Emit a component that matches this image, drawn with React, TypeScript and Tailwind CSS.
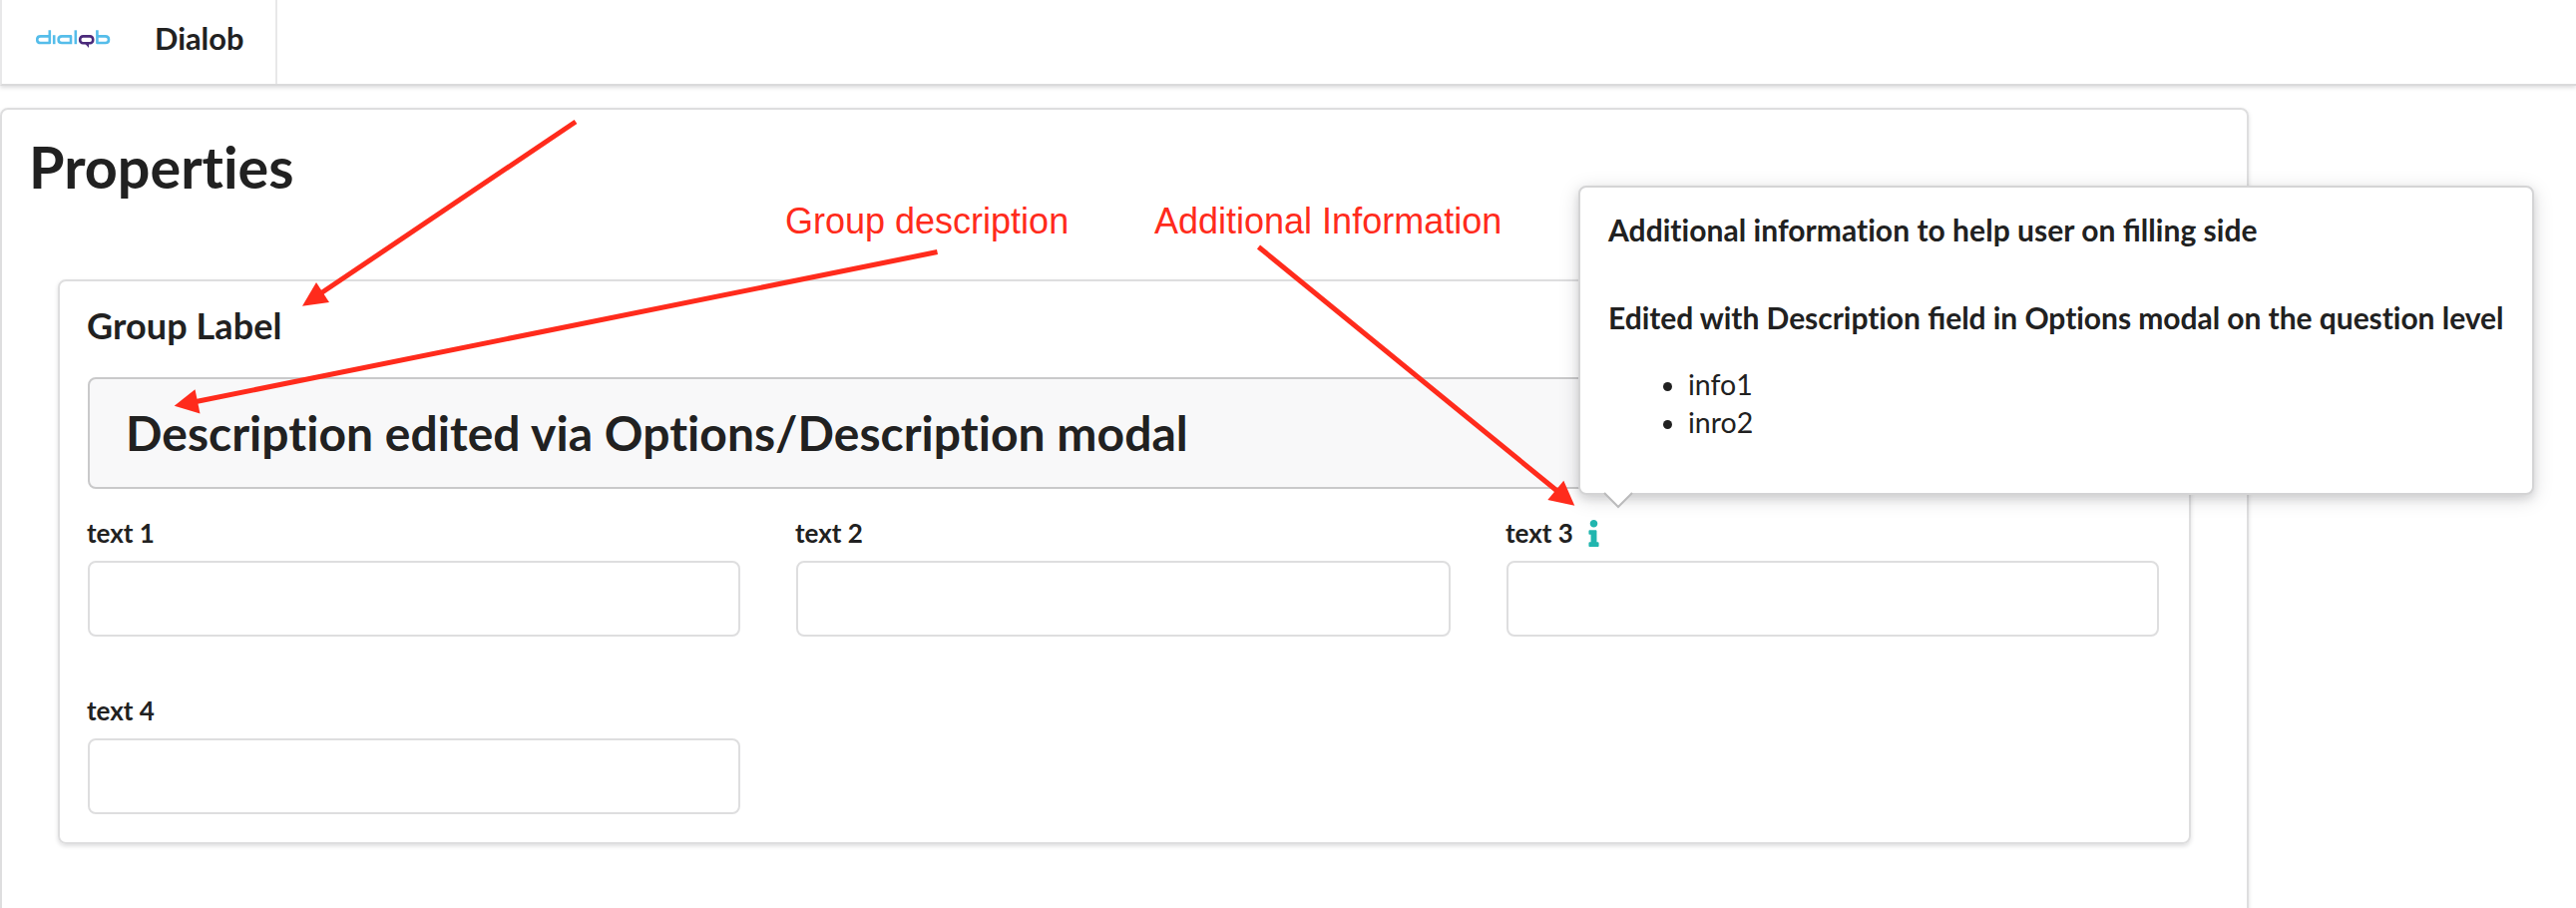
import type { ReactNode } from "react";
import { FaInfo } from "react-icons/fa";

function Logo() {
  return (
    <svg width="76" height="20" viewBox="36 29 76 20" fill="none" strokeWidth="2.6" strokeLinejoin="round">
      <g stroke="#55bdea">
        <path d="M49.8 30.3V43H40.6Q37.2 43 37.2 39.7T40.6 36.4H49.8" />
        <path d="M54.2 35.2V44.2" />
        <path d="M71 44.2V36.4H62Q58.6 36.4 58.6 39.7T62 43H71" />
        <path d="M75.8 30.3V44.2" />
        <path d="M97.4 30.3V43H105.6Q109 43 109 39.7T105.6 36.4H97.4" />
      </g>
      <rect x="80.2" y="36.4" width="13" height="6.8" rx="3" stroke="#4b2a7b" />
      <path d="M85 43.5H89V48Z" fill="#4b2a7b" />
    </svg>
  );
}

function Fi() {
  return <span className="tracking-normal [font-variant-ligatures:common-ligatures]">fi</span>;
}

function Field({ label, children }: { label: string; children?: ReactNode }) {
  return (
    <label className="block">
      <span className="mb-[12px] -ml-px flex h-[32px] items-center text-[26px] leading-[32px] font-bold">
        {label}
        {children}
      </span>
      <input className="block h-[76px] w-full rounded-[8px] border-2 border-[#dededf] bg-white px-7 outline-none" />
    </label>
  );
}

function Popup() {
  return (
    <div className="absolute top-[186px] left-[1582px] h-[310px] w-[958px] rounded-[8px] border-2 border-[#d4d4d5] bg-white px-[28px] pt-[23px] shadow-[0_4px_8px_0_rgba(34,36,38,0.12),0_4px_20px_0_rgba(34,36,38,0.15)]">
      <h4 className="text-[30px] leading-[38px] font-bold tracking-[0.04px] whitespace-nowrap">
        Additional information to help user on <Fi />lling side
      </h4>
      <h4 className="mt-[50px] text-[30px] leading-[38px] font-bold tracking-[-0.05px] whitespace-nowrap">
        Edited with Description <Fi />eld in Options modal on the question level
      </h4>
      <ul className="mt-[29px] list-disc pl-[80px] text-[28.5px] leading-[38px]">
        <li>info1</li>
        <li>inro2</li>
      </ul>
      <svg className="absolute top-[304px] left-[22px]" width="32" height="18" viewBox="0 0 32 18">
        <path d="M1 0H31L16 15Z" fill="#fff" />
        <path d="M2 2L16 16L30 2" fill="none" stroke="#bbbbbc" strokeWidth="2" />
      </svg>
    </div>
  );
}

function Annotations() {
  return (
    <div className="pointer-events-none absolute inset-0 font-['Liberation_Sans',Arial,sans-serif] text-[36px] leading-[40px] text-[#ff2b1c]">
      <svg className="absolute inset-0" width="2582" height="910" viewBox="0 0 2582 910" fill="#ff2b1c" stroke="#ff2b1c">
        <g strokeWidth="5">
          <path d="M577 122L320 295" />
          <path d="M939.5 252.5L194 403" />
          <path d="M1261.5 247.5L1562 493" />
        </g>
        <g stroke="none">
          <path d="M303 306.7L317 283L330 303Z" />
          <path d="M174.7 406.7L195.5 390.3L200.5 414.5Z" />
          <path d="M1578.3 506.7L1567.3 481.7L1551.3 501Z" />
        </g>
      </svg>
      <span className="absolute top-[202px] left-[787px] whitespace-nowrap">Group description</span>
      <span className="absolute top-[202px] left-[1157px] whitespace-nowrap">Additional Information</span>
    </div>
  );
}

export default function App() {
  return (
    <div className="relative h-[910px] w-[2582px] overflow-hidden bg-white font-['Lato',sans-serif] text-[28px] text-[#212121] [font-variant-ligatures:none]">
      <header className="flex h-[86px] border-b-2 border-l-2 border-b-[#dadadb] border-l-[#e8e8e9] bg-white shadow-[0_2px_4px_0_rgba(34,36,38,0.15)]">
        <div className="flex w-[276px] items-start border-r-2 border-[#e8e8e9] pt-[19px] pl-[34px]">
          <div className="flex h-[40px] items-center">
            <Logo />
          </div>
          <span className="ml-[43px] text-[30.8px] leading-[40px] font-bold">Dialob</span>
        </div>
      </header>
      <main className="mt-[22px] h-[840px] w-[2254px] rounded-[8px] border-2 border-[#dededf] px-[56px] pt-[21px] shadow-[0_2px_4px_0_rgba(34,36,38,0.15)]">
        <h1 className="-ml-[29px] text-[57.5px] leading-[72px] font-bold">Properties</h1>
        <section className="mt-[77px] h-[566px] w-[2138px] rounded-[8px] border-2 border-[#dededf] px-[28px] pt-[21px] shadow-[0_2px_4px_0_rgba(34,36,38,0.15)]">
          <h3 className="-ml-px text-[36px] leading-[46px] font-bold tracking-[0.1px]">Group Label</h3>
          <div className="mt-[29px] flex h-[112px] w-[2076px] items-center rounded-[8px] border-2 border-[#c9c9ca] bg-[#f8f8f9] px-[36px]">
            <h2 className="text-[48px] leading-[60px] font-bold tracking-[0.03px]">Description edited via Options/Description modal</h2>
          </div>
          <div className="mt-[28px] grid grid-cols-[654px_656px_654px] gap-x-[56px] gap-y-[58px]">
            <Field label="text 1" />
            <Field label="text 2" />
            <Field label="text 3">
              <FaInfo className="ml-[15px] h-[27px] w-[11px] text-[#20b5ae]" />
            </Field>
            <Field label="text 4" />
          </div>
        </section>
      </main>
      <Popup />
      <Annotations />
    </div>
  );
}
